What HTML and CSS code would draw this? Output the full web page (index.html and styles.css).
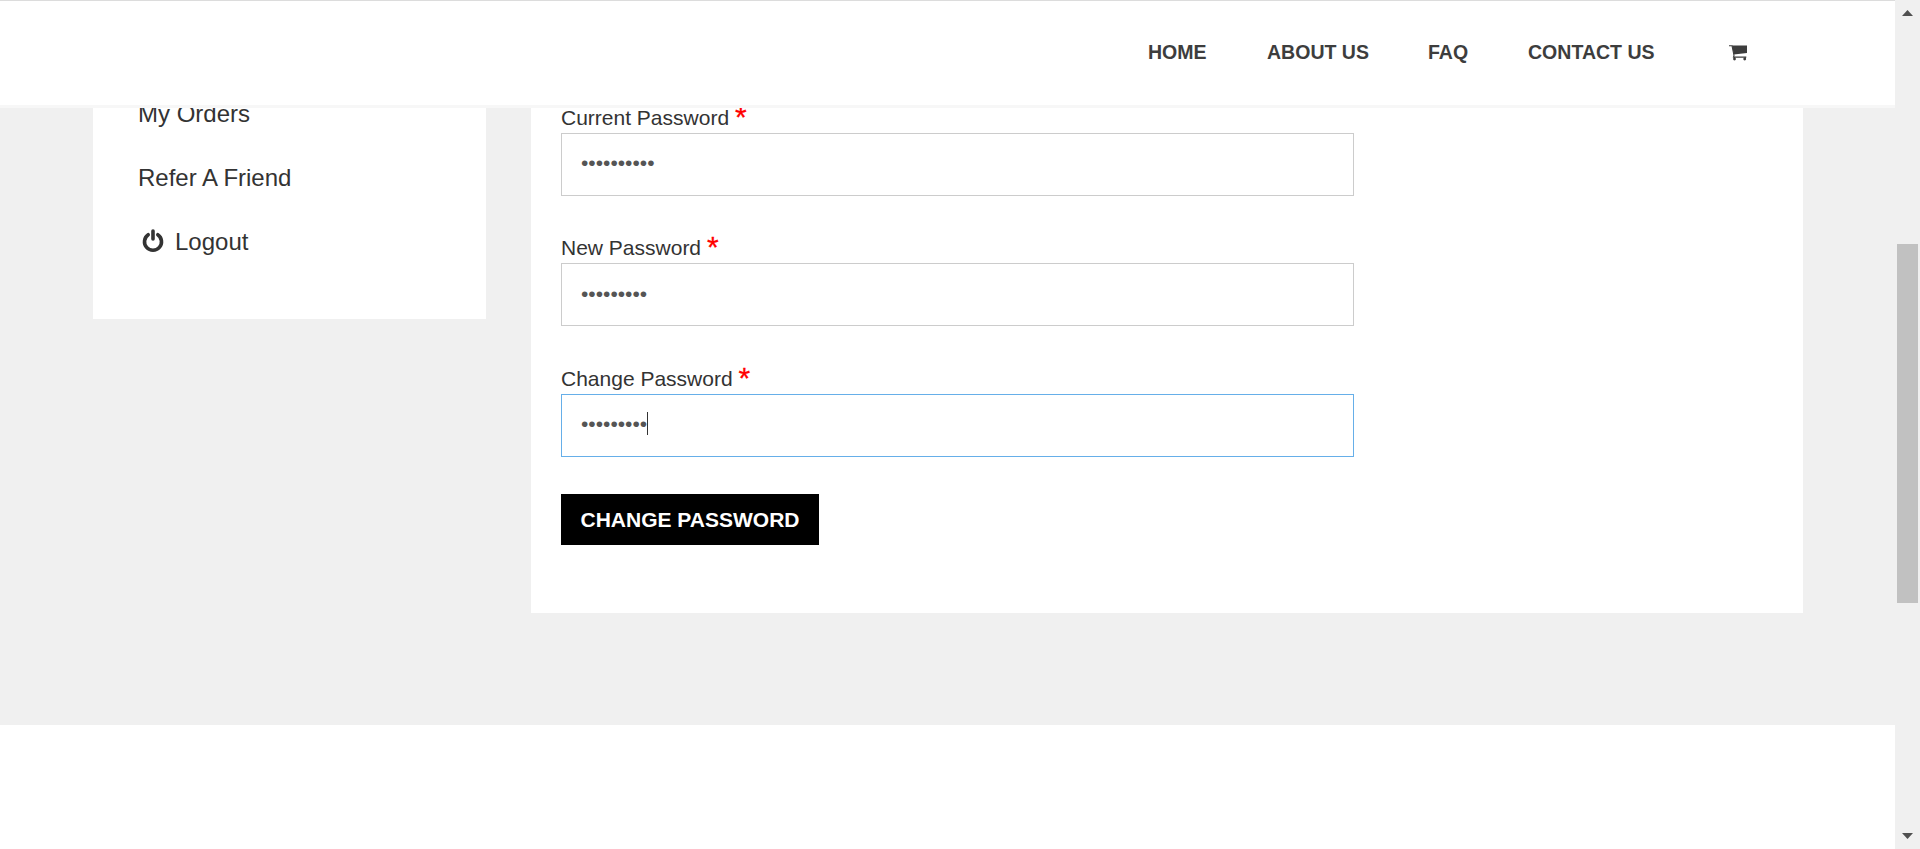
FILE: index.html
```html
<!DOCTYPE html>
<html lang="en">
<head>
<meta charset="utf-8">
<title>Change Password</title>
<link rel="stylesheet" href="styles.css">
</head>
<body>
<div class="page">
  <header class="header">
    <nav class="nav">
      <a class="nav-link home">HOME</a>
      <a class="nav-link about">ABOUT US</a>
      <a class="nav-link faq">FAQ</a>
      <a class="nav-link contact">CONTACT US</a>
      <svg class="cart" width="20" height="17" viewBox="0 0 20 17"><path fill="#3d3d3d" d="M4 .4H19V8L5.800 9.400Z"/><path d="M1 .7H4L6 10.500L5.500 12.100H18.300" fill="none" stroke="#3d3d3d" stroke-width="1.100"/><circle cx="6.500" cy="14" r="1.400" fill="#3d3d3d"/><circle cx="16.700" cy="14" r="1.400" fill="#3d3d3d"/><path d="M6.500 12v2M17.200 12v2" stroke="#3d3d3d"/></svg>
    </nav>
  </header>
  <main class="account">
    <aside class="sidebar">
      <a class="side-link">My Orders</a>
      <a class="side-link">Refer A Friend</a>
      <a class="side-link logout"><svg class="power" width="22" height="25" viewBox="0 0 22 25" fill="none" stroke="#333" stroke-width="3.600" stroke-linecap="round"><path d="M6.200 6.700A8.500 8.500 0 1 0 15.800 6.700"/><path d="M11 3V11"/></svg>Logout</a>
    </aside>
    <form class="panel">
      <div class="group">
        <label class="label">Current Password <span class="star">*</span></label>
        <div class="field first">••••••••••</div>
      </div>
      <div class="group">
        <label class="label">New Password <span class="star">*</span></label>
        <div class="field">•••••••••</div>
      </div>
      <div class="group last">
        <label class="label">Change Password <span class="star">*</span></label>
        <div class="field focused">•••••••••<span class="caret"></span></div>
      </div>
      <button class="submit" type="button">CHANGE PASSWORD</button>
    </form>
  </main>
</div>
<div class="scrollbar">
  <svg width="11" height="6" viewBox="0 0 11 6"><path d="M5.500 0L11 6H0Z" fill="#505050"/></svg>
  <div class="thumb"></div>
  <svg width="11" height="6" viewBox="0 0 11 6"><path d="M0 0H11L5.500 6Z" fill="#505050"/></svg>
</div>
</body>
</html>
```
FILE: styles.css
```css
* { box-sizing: border-box; }
body {
  margin: 0;
  height: 849px;
  display: flex;
  overflow: hidden;
  background: #fff;
  color: #333;
  font-family: "Liberation Sans", Arial, sans-serif;
}
.page { width: 1895px; }
.header {
  height: 108px;
  border-top: 1px solid #dcdcdc;
  border-bottom: 3px solid #f7f7f7;
  background: #fff;
}
.nav { display: flex; padding: 39px 0 0 1148px; }
.nav-link {
  font-size: 21px;
  line-height: 23px;
  font-weight: bold;
  color: #3d3d3d;
  white-space: nowrap;
  transform: scaleX(.93);
  transform-origin: left;
}
.home { width: 119px; }
.about { width: 161px; }
.faq { width: 100px; }
.contact { width: 200px; }
.cart { margin-top: 5px; }
.account {
  display: flex;
  align-items: flex-start;
  gap: 45px;
  height: 617px;
  padding-left: 93px;
  background: #f0f0f0;
}
.sidebar {
  width: 393px;
  height: 211px;
  padding-left: 45px;
  overflow: hidden;
  background: #fff;
}
.side-link {
  display: block;
  height: 64px;
  font-size: 24px;
  line-height: 28px;
}
.side-link:first-child { height: 56px; margin-top: -8px; }
.side-link:nth-child(2) { margin-top: 8px; }
.logout { display: flex; }
.power { margin: 0 11px 0 4px; }
.panel {
  width: 1272px;
  height: 505px;
  padding-left: 30px;
  overflow: hidden;
  background: #fff;
}
.group { height: 130px; }
.group.last { height: 131px; padding-top: 1px; }
.label {
  display: block;
  height: 25px;
  font-size: 21px;
  line-height: 20px;
  white-space: nowrap;
}
.star {
  font-size: 30px;
  line-height: 0;
  color: #f00;
  -webkit-text-stroke: .3px #f00;
  vertical-align: -2px;
}
.field {
  display: flex;
  align-items: center;
  width: 793px;
  height: 63px;
  padding: 0 0 2px 19px;
  border: 1px solid #ccc;
  font-size: 21px;
  line-height: 24px;
  color: #555;
}
.field.first { padding-bottom: 4px; }
.field.focused { border-color: #66afe9; padding-bottom: 4px; }
.caret { width: 1px; height: 23px; background: #333; }
.submit {
  display: block;
  margin-top: -5px;
  width: 258px;
  height: 51px;
  padding: 0;
  border: 0;
  background: #000;
  color: #fff;
  font: bold 21px/51px "Liberation Sans", Arial, sans-serif;
}
.scrollbar {
  display: flex;
  flex-direction: column;
  align-items: center;
  justify-content: space-between;
  width: 25px;
  padding: 10px 0;
  background: #f0f0f0;
}
.thumb {
  width: 21px;
  height: 359px;
  margin: 228px 0 230px;
  background: #c1c1c1;
}
```
